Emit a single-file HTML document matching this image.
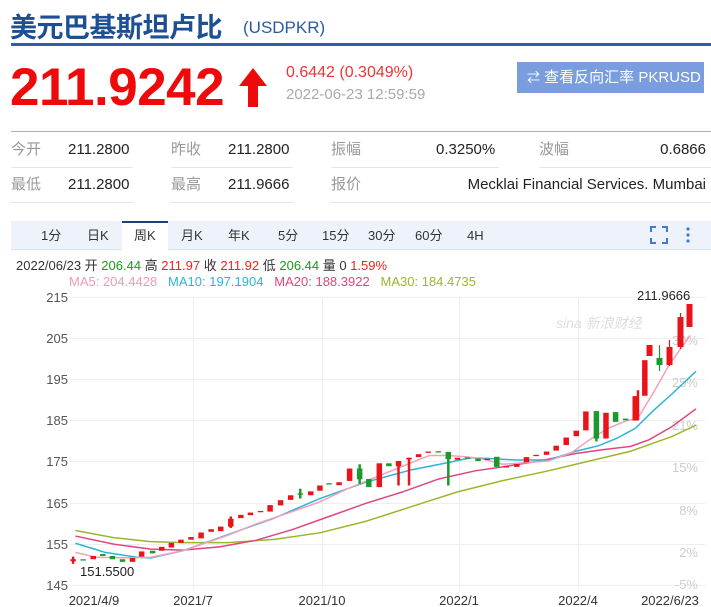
<!DOCTYPE html>
<html><head><meta charset="utf-8"><style>
*{margin:0;padding:0;box-sizing:border-box}
body{width:711px;height:607px;overflow:hidden;background:#fff;font-family:"Liberation Sans","Noto Sans CJK SC",sans-serif;position:relative}
.a{position:absolute;white-space:nowrap;line-height:18px}
.lb{color:#999;font-size:15px}
.v{color:#222;font-size:15px}
</style></head><body>
<div class="a" style="left:10px;top:9px;font-size:27px;line-height:34px;font-weight:bold;color:#1d4f94;font-family:'Noto Sans CJK SC',sans-serif;letter-spacing:-0.5px">美元巴基斯坦卢比</div>
<div class="a" style="left:243px;top:18px;font-size:17px;line-height:20px;color:#2a5aa0">(USDPKR)</div>
<div class="a" style="left:11px;top:43px;width:700px;height:3px;background:#2f5fa8"></div>
<div class="a" style="left:10px;top:60px;font-size:53px;line-height:56px;font-weight:bold;color:#ee0a0a;letter-spacing:-0.5px">211.9242</div>
<svg class="a" style="left:236px;top:66px" width="34" height="42"><path d="M17 2 L31 20 L22 20 L22 41 L12 41 L12 20 L3 20 Z" fill="#ee0a0a"/></svg>
<div class="a" style="left:286px;top:64px;font-size:16px;color:#e33">0.6442 (0.3049%)</div>
<div class="a" style="left:286px;top:86px;font-size:15px;color:#aaa">2022-06-23 12:59:59</div>
<div class="a" style="left:517px;top:62px;width:187px;height:31px;background:#7a9de0;color:#fff;font-size:15px;line-height:31px;padding-left:10px"><span style="font-size:13px">⇄</span> 查看反向汇率 PKRUSD</div>
<div class="a" style="left:11px;top:131px;width:700px;height:1px;background:#9db3d6"></div>
<div class="a lb" style="left:11px;top:141px">今开</div><div class="a v" style="left:68px;top:141px">211.2800</div>
<div class="a lb" style="left:171px;top:141px">昨收</div><div class="a v" style="left:228px;top:141px">211.2800</div>
<div class="a lb" style="left:331px;top:141px">振幅</div><div class="a v" style="left:436px;top:141px">0.3250%</div>
<div class="a lb" style="left:539px;top:141px">波幅</div><div class="a v" style="right:5px;top:141px">0.6866</div>
<div class="a lb" style="left:11px;top:176px">最低</div><div class="a v" style="left:68px;top:176px">211.2800</div>
<div class="a lb" style="left:171px;top:176px">最高</div><div class="a v" style="left:228px;top:176px">211.9666</div>
<div class="a lb" style="left:331px;top:176px">报价</div><div class="a v" style="right:5px;top:176px">Mecklai Financial Services. Mumbai</div>
<div class="a" style="left:11px;top:167px;width:122px;height:1px;background:#e4e4e4"></div>
<div class="a" style="left:171px;top:167px;width:122px;height:1px;background:#e4e4e4"></div>
<div class="a" style="left:331px;top:167px;width:168px;height:1px;background:#e4e4e4"></div>
<div class="a" style="left:539px;top:167px;width:172px;height:1px;background:#e4e4e4"></div>
<div class="a" style="left:11px;top:202px;width:122px;height:1px;background:#e4e4e4"></div>
<div class="a" style="left:171px;top:202px;width:122px;height:1px;background:#e4e4e4"></div>
<div class="a" style="left:331px;top:202px;width:380px;height:1px;background:#e4e4e4"></div>
<div class="a" style="left:11px;top:221px;width:700px;height:29px;background:#eef3fb;border-bottom:1px solid #d8e2f0"></div>
<div class="a" style="left:122px;top:221px;width:46px;height:29px;background:#fff;border-top:2px solid #1e3f7a"></div>
<div class="a" style="top:227px;left:0;font-size:13px;color:#333;width:711px;height:20px">
<span class="a" style="left:41px">1分</span><span class="a" style="left:87px">日K</span><span class="a" style="left:134px">周K</span><span class="a" style="left:181px">月K</span><span class="a" style="left:228px">年K</span><span class="a" style="left:278px">5分</span><span class="a" style="left:322px">15分</span><span class="a" style="left:368px">30分</span><span class="a" style="left:415px">60分</span><span class="a" style="left:467px">4H</span></div>
<svg class="a" style="left:650px;top:226px" width="45" height="18"><path d="M1 6V1H6M12 1H17V6M17 12V17H12M6 17H1V12" fill="none" stroke="#3d7bd6" stroke-width="2"/><circle cx="38" cy="3" r="1.6" fill="#3d7bd6"/><circle cx="38" cy="9" r="1.6" fill="#3d7bd6"/><circle cx="38" cy="15" r="1.6" fill="#3d7bd6"/></svg>
<div class="a" style="left:16px;top:257px;font-size:13px;color:#333">2022/06/23 开 <span style="color:#1a9a1a">206.44</span> 高 <span style="color:#e22">211.97</span> 收 <span style="color:#e22">211.92</span> 低 <span style="color:#1a9a1a">206.44</span> 量 0 <span style="color:#e22">1.59%</span></div>
<div class="a" style="left:69px;top:273px;font-size:13px"><span style="color:#f29ab5">MA5: 204.4428</span>&nbsp;&nbsp; <span style="color:#2db4d4">MA10: 197.1904</span>&nbsp;&nbsp; <span style="color:#e0457f">MA20: 188.3922</span>&nbsp;&nbsp; <span style="color:#9ab72a">MA30: 184.4735</span></div>
<svg class="a" style="left:0;top:0" width="711" height="607">
<g stroke="#eee" stroke-width="1">
<line x1="70" y1="297.5" x2="705" y2="297.5"/><line x1="70" y1="338.5" x2="705" y2="338.5"/><line x1="70" y1="379.5" x2="705" y2="379.5"/><line x1="70" y1="420.5" x2="705" y2="420.5"/><line x1="70" y1="461.5" x2="705" y2="461.5"/><line x1="70" y1="503.5" x2="705" y2="503.5"/><line x1="70" y1="544.5" x2="705" y2="544.5"/><line x1="70" y1="585.5" x2="705" y2="585.5"/>
<line x1="193.5" y1="297" x2="193.5" y2="590"/><line x1="322.5" y1="297" x2="322.5" y2="590"/><line x1="459.5" y1="297" x2="459.5" y2="590"/><line x1="578.5" y1="297" x2="578.5" y2="590"/>
</g>
<g font-size="13" fill="#555" text-anchor="end"><text x="68" y="302">215</text><text x="68" y="343">205</text><text x="68" y="384">195</text><text x="68" y="425">185</text><text x="68" y="466">175</text><text x="68" y="508">165</text><text x="68" y="549">155</text><text x="68" y="590">145</text></g>
<g font-size="13" fill="#ccc" text-anchor="end"><text x="698" y="345">30%</text><text x="698" y="387">25%</text><text x="698" y="430">21%</text><text x="698" y="472">15%</text><text x="698" y="515">8%</text><text x="698" y="557">2%</text><text x="698" y="589">-5%</text></g>
<text x="556" y="328" font-size="14" fill="#ddd" font-style="italic">sina 新浪财经</text>
<text x="637" y="300" font-size="13" fill="#222">211.9666</text>
<text x="80" y="576" font-size="13" fill="#222">151.5500</text>
<g font-size="13" fill="#333" text-anchor="middle"><text x="94" y="605">2021/4/9</text><text x="193" y="605">2021/7</text><text x="322" y="605">2021/10</text><text x="459" y="605">2022/1</text><text x="578" y="605">2022/4</text><text x="670" y="605">2022/6/23</text></g>
<g transform="matrix(0.457 0 0 0.3263 0 335.4)" fill="none">
<polyline vector-effect="non-scaling-stroke" stroke="#9ab72a" stroke-width="1.5" points="165,598 250,620 330,632 400,635 500,635 600,625 700,605 800,570 900,525 1000,480 1100,445 1200,415 1260,395 1320,375 1380,355 1420,335 1470,310 1523,275"/>
<polyline vector-effect="non-scaling-stroke" stroke="#e0457f" stroke-width="1.5" points="165,615 250,640 330,655 400,658 480,648 560,628 640,595 720,555 800,515 880,480 960,440 1040,415 1100,403 1180,385 1260,362 1320,350 1380,340 1420,320 1470,280 1523,225"/>
<polyline vector-effect="non-scaling-stroke" stroke="#2db4d4" stroke-width="1.5" points="165,637 230,665 300,680 330,682 400,660 500,610 600,560 700,500 800,450 900,412 980,390 1030,375 1080,378 1130,382 1200,382 1260,355 1310,338 1350,315 1390,285 1430,230 1470,180 1523,110"/>
<polyline vector-effect="non-scaling-stroke" stroke="#f4a0b8" stroke-width="1.5" points="165,665 210,680 290,682 330,680 400,660 500,612 560,578 640,540 700,510 760,470 830,430 900,390 940,368 980,368 1020,372 1060,380 1100,395 1150,390 1200,385 1250,360 1290,320 1330,285 1370,262 1395,255 1430,175 1464,91 1510,0"/>
</g>
<g transform="matrix(0.457 0 0 0.3263 0 335.4)">
<g fill="#e8141a">
<rect x="154" y="686" width="12" height="6"/><rect x="198" y="676" width="12" height="10"/><rect x="284" y="682" width="12" height="12"/><rect x="304" y="662" width="12" height="16"/><rect x="348" y="648" width="12" height="12"/><rect x="369" y="636" width="12" height="14"/><rect x="390" y="626" width="12" height="10"/><rect x="412" y="618" width="12" height="8"/><rect x="434" y="604" width="12" height="18"/><rect x="456" y="594" width="12" height="8"/><rect x="477" y="586" width="12" height="14"/><rect x="499" y="562" width="12" height="24"/><rect x="521" y="550" width="12" height="10"/><rect x="542" y="543" width="12" height="8"/><rect x="564" y="538" width="12" height="4"/><rect x="585" y="520" width="12" height="20"/><rect x="608" y="505" width="12" height="16"/><rect x="630" y="490" width="12" height="14"/><rect x="674" y="478" width="12" height="12"/><rect x="694" y="460" width="12" height="16"/><rect x="736" y="450" width="12" height="9"/><rect x="759" y="408" width="12" height="38"/><rect x="824" y="392" width="12" height="73"/><rect x="866" y="385" width="12" height="16"/><rect x="889" y="375" width="12" height="5"/><rect x="910" y="364" width="12" height="9"/><rect x="931" y="356" width="12" height="4"/><rect x="995" y="375" width="12" height="6"/><rect x="1060" y="378" width="12" height="4"/><rect x="1102" y="401" width="12" height="4"/><rect x="1125" y="394" width="12" height="9"/><rect x="1146" y="373" width="12" height="16"/><rect x="1167" y="366" width="12" height="4"/><rect x="1190" y="356" width="12" height="10"/><rect x="1211" y="338" width="12" height="15"/><rect x="1233" y="313" width="12" height="23"/><rect x="1255" y="292" width="12" height="17"/><rect x="1276" y="233" width="12" height="58"/><rect x="1320" y="237" width="12" height="79"/><rect x="1384" y="186" width="12" height="75"/><rect x="1405" y="76" width="12" height="109"/>
</g>
<g fill="#1a9a2a">
<rect x="176" y="686" width="12" height="4"/><rect x="219" y="670" width="12" height="6"/><rect x="240" y="676" width="12" height="10"/><rect x="262" y="686" width="12" height="8"/><rect x="328" y="660" width="12" height="8"/><rect x="651" y="484" width="12" height="4"/><rect x="714" y="453" width="12" height="4"/><rect x="781" y="408" width="12" height="33"/><rect x="801" y="440" width="12" height="25"/><rect x="845" y="392" width="12" height="9"/><rect x="953" y="355" width="12" height="4"/><rect x="975" y="357" width="12" height="22"/><rect x="1017" y="374" width="12" height="4"/><rect x="1040" y="377" width="12" height="8"/><rect x="1081" y="372" width="12" height="31"/><rect x="1299" y="232" width="12" height="84"/><rect x="1341" y="235" width="12" height="30"/><rect x="1363" y="255" width="12" height="5"/>
</g>
<g stroke-width="2.5">
<line vector-effect="non-scaling-stroke" x1="787" y1="395" x2="787" y2="455" stroke="#1a9a2a"/><line vector-effect="non-scaling-stroke" x1="981" y1="360" x2="981" y2="460" stroke="#1a9a2a"/><line vector-effect="non-scaling-stroke" x1="1305" y1="232" x2="1305" y2="325" stroke="#1a9a2a"/><line vector-effect="non-scaling-stroke" x1="657" y1="470" x2="657" y2="500" stroke="#1a9a2a"/>
<line vector-effect="non-scaling-stroke" x1="872" y1="385" x2="872" y2="460" stroke="#e8141a"/><line vector-effect="non-scaling-stroke" x1="895" y1="375" x2="895" y2="460" stroke="#e8141a"/><line vector-effect="non-scaling-stroke" x1="1396" y1="168" x2="1396" y2="260" stroke="#e8141a"/><line vector-effect="non-scaling-stroke" x1="160" y1="678" x2="160" y2="700" stroke="#e8141a"/><line vector-effect="non-scaling-stroke" x1="505" y1="555" x2="505" y2="590" stroke="#e8141a"/>
</g>
</g>
<g>
<rect x="646.5" y="345" width="6" height="11" fill="#e8141a"/>
<line x1="659.5" y1="345" x2="659.5" y2="371" stroke="#1a9a2a" stroke-width="1.2"/>
<rect x="656.5" y="358" width="6" height="7" fill="#1a9a2a"/>
<line x1="669.5" y1="340" x2="669.5" y2="366" stroke="#e8141a" stroke-width="1.2"/>
<rect x="666.5" y="347" width="6" height="18" fill="#e8141a"/>
<line x1="680.5" y1="313" x2="680.5" y2="349" stroke="#e8141a" stroke-width="1.2"/>
<rect x="677.5" y="317" width="6" height="30" fill="#e8141a"/>
<rect x="686.5" y="304" width="6" height="23" fill="#e8141a"/>
</g>
</svg>
</body></html>
